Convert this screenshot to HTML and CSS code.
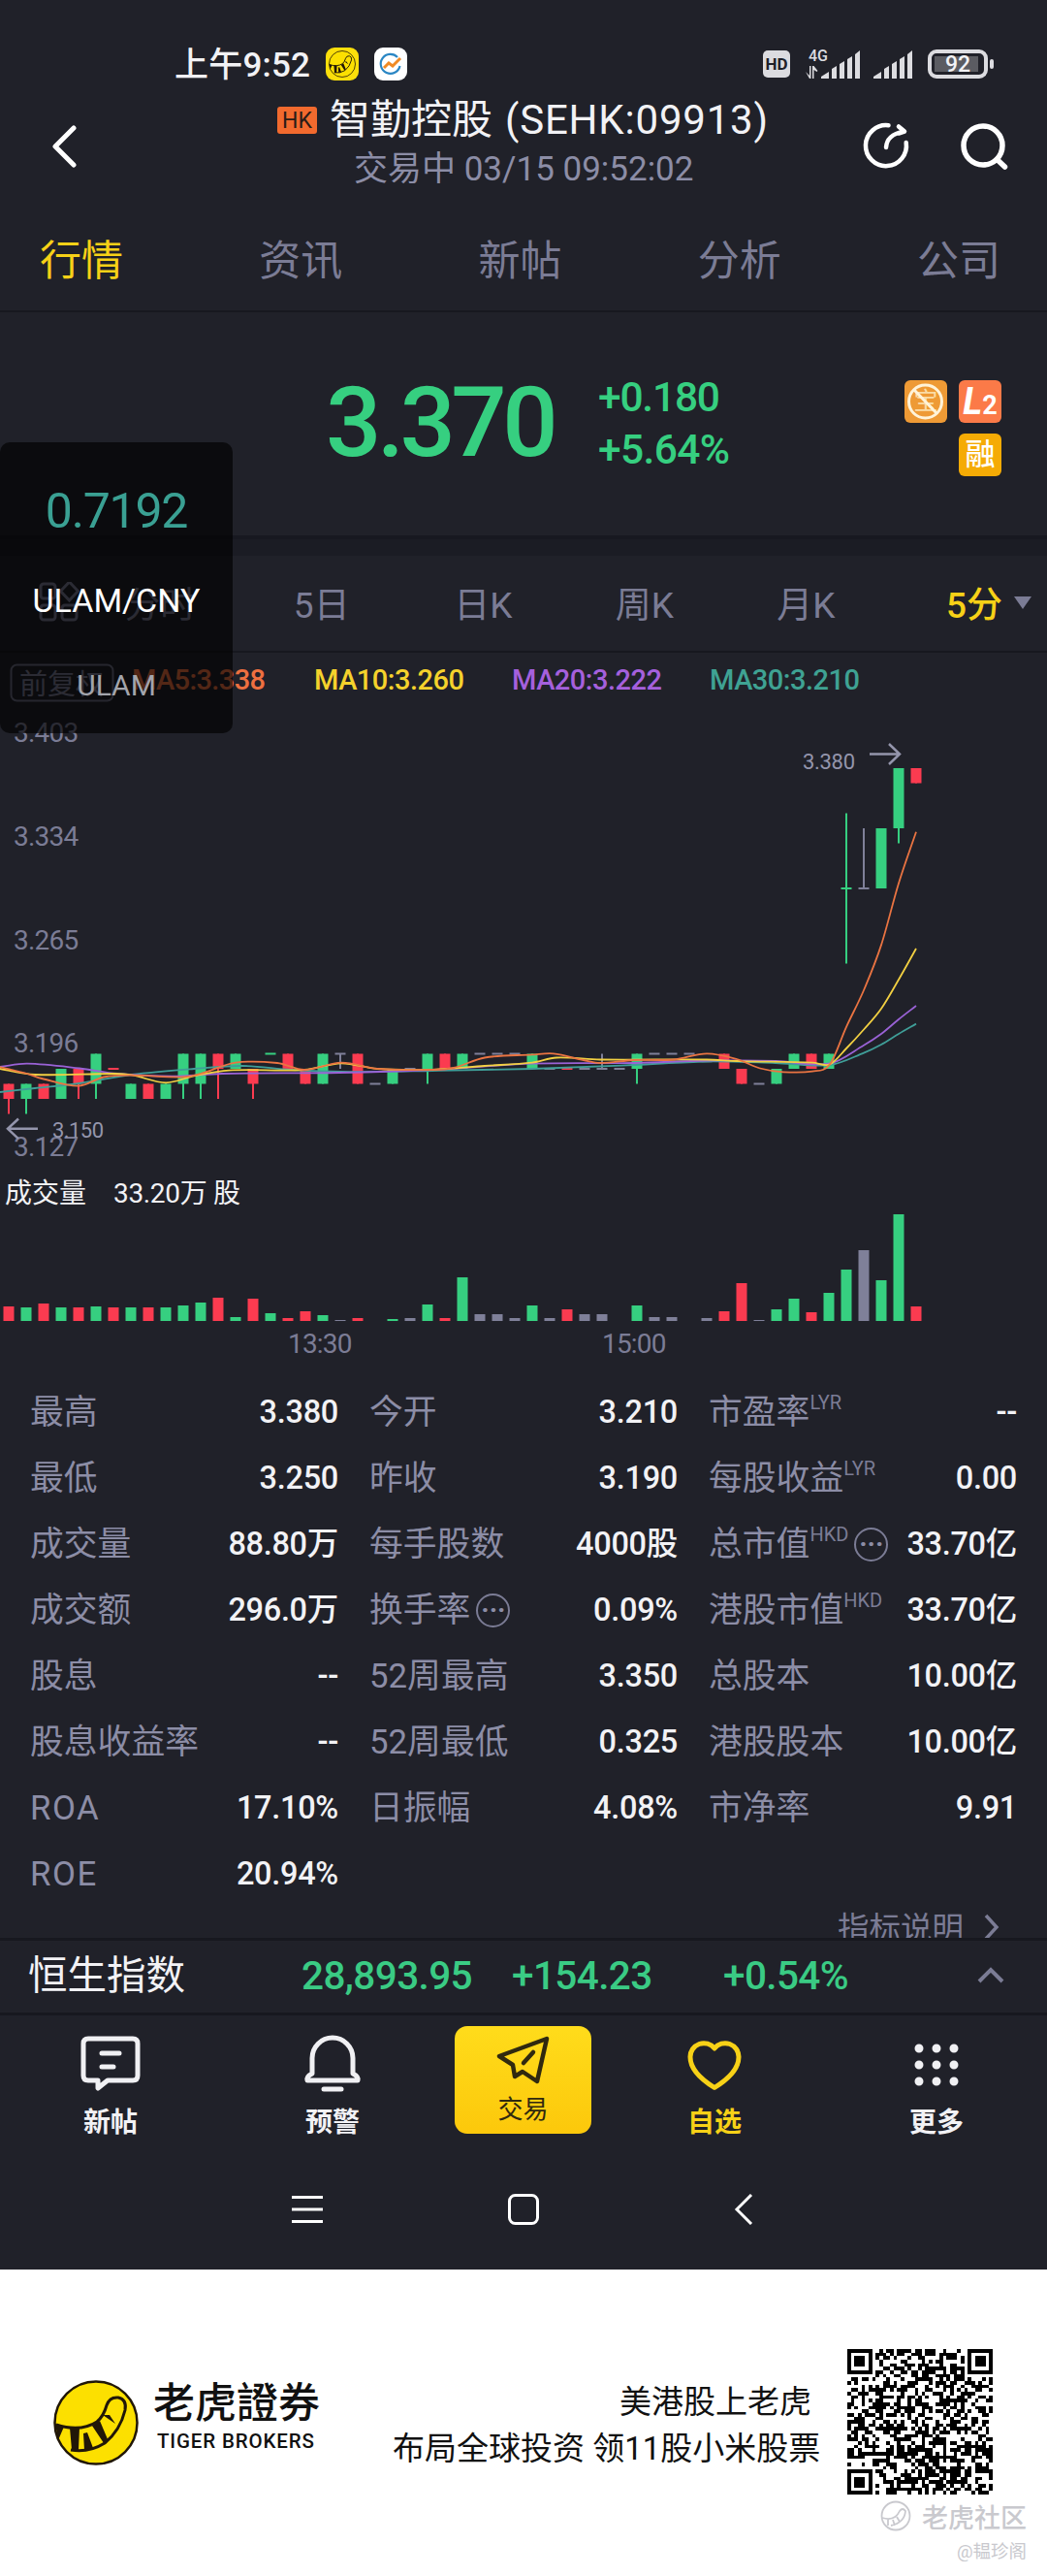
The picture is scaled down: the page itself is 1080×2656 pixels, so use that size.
FILE: index.html
```
<!DOCTYPE html>
<html lang="zh-CN">
<head>
    <meta charset="UTF-8">
    <title>智勤控股 (SEHK:09913)</title>
    <link rel="stylesheet" href="styles.css">
</head>
<body>
    <div class="phone">
        <div class="status-bar">
            <span class="clock">上午9:52</span>
            <svg class="app-icon" width="34" height="34" viewBox="0 0 34 34">
                <rect width="34" height="34" rx="9" fill="#fcdf0b"/>
                <g transform="translate(3 3) scale(.318)"><use href="#tiger"/></g>
            </svg>
            <svg class="app-icon" width="34" height="34" viewBox="0 0 34 34">
                <rect width="34" height="34" rx="9" fill="#fff"/>
                <path d="M24 10a10 10 0 1 0 2.500 9" fill="none" stroke="#2a86c4" stroke-width="2.200"/>
                <path d="M10 21l5-5 4 3 8-8" fill="none" stroke="#f08a24" stroke-width="3"/>
            </svg>
            <div class="status-right">
                <span class="hd">HD</span>
                <svg width="58" height="36" viewBox="0 0 58 36" fill="#dcdce0">
                    <text x="3" y="15" font-size="16" font-weight="500">4G</text>
                    <path d="M0 26l4 4V20h1.500v13H4zM7 33V20h1.500l4 5-1 1-3-2v9z"/>
                    <path d="M16 33v-2l8-5v7zM27 33V23l5-3v13zM35 33V18l5-3v18zM43 33V13l5-3v23zM51 33V8l5-4v29z"/>
                </svg>
                <svg width="42" height="36" viewBox="0 0 42 36" fill="#dcdce0">
                    <path d="M0 33v-2l8-5v7zM11 33V23l5-3v13zM19 33V18l5-3v18zM27 33V13l5-3v23zM35 33V8l5-4v29z"/>
                </svg>
                <div class="battery"><span>92</span></div>
            </div>
        </div>

        <div class="header">
            <svg class="back" width="28" height="46" viewBox="0 0 28 46"><path d="M25 4L6 23l19 19" fill="none" stroke="#fff" stroke-width="5" stroke-linecap="round" stroke-linejoin="round"/></svg>
            <div class="heading">
                <div class="title"><span class="hk">HK</span><span>智勤控股</span><span class="code">(SEHK:09913)</span></div>
                <div class="subtitle">交易中 03/15 09:52:02</div>
            </div>
            <svg width="50" height="50" viewBox="0 0 50 50" fill="none" stroke="#fff" stroke-width="4.500" stroke-linecap="round" stroke-linejoin="round">
                <path d="M27.500 4.300A21 21 0 1 0 45.700 22"/>
                <path d="M25 27c.5-8 6-14.500 18-16M38 5.500l6 5-6 2"/>
            </svg>
            <svg class="search" width="50" height="50" viewBox="0 0 50 50" fill="none" stroke="#fff" stroke-width="5.500" stroke-linecap="round">
                <circle cx="24" cy="25" r="20"/><path d="M38.500 39.500l8 7.500"/>
            </svg>
        </div>

        <div class="tabs">
            <span class="active">行情</span><span>资讯</span><span>新帖</span><span>分析</span><span>公司</span>
        </div>

        <div class="quote">
            <div class="price">3.370</div>
            <div class="change"><span>+0.180</span><span class="rise">+5.64%</span></div>
            <div class="badges">
                <span class="badge badge-bao">宝<svg width="43" height="44" viewBox="0 0 43 44" fill="none" stroke="#fff3d8" stroke-width="3"><circle cx="21.500" cy="22" r="17"/><path d="M10 10l23 24"/></svg></span>
                <span class="badge badge-l2">L<small>2</small></span>
                <span class="badge badge-rong">融</span>
            </div>
        </div>

        <div class="band"></div>

        <div class="periods">
            <svg width="42" height="42" viewBox="0 0 42 42" fill="none" stroke="#7b7c95" stroke-width="3">
                <rect x="2" y="2" width="15" height="15" rx="3"/><rect x="2" y="24" width="15" height="15" rx="3"/>
                <rect x="24" y="24" width="15" height="15" rx="3"/><path d="M31.500 0l9 9.500-9 9.500-9-9.500z"/>
            </svg>
            <span>分时</span><span>5日</span><span>日K</span><span>周K</span><span>月K</span><span class="active">5分<i></i></span>
        </div>

        <svg id="chart" class="chart" width="1080" height="749" viewBox="0 673 1080 749">
            <rect x="11.500" y="685.500" width="105" height="37" rx="6" fill="none" stroke="#6d6e85" stroke-width="2"/>
            <text x="20" y="716" font-size="29" fill="#7b7c95">前复权</text>
            <g class="ma">
                <text x="136" y="711" textLength="138" fill="#ee7040">MA5:3.338</text>
                <text x="324" y="711" textLength="155" fill="#f5d22c">MA10:3.260</text>
                <text x="528" y="711" textLength="155" fill="#a560dd">MA20:3.222</text>
                <text x="732" y="711" textLength="155" fill="#3fa293">MA30:3.210</text>
            </g>
            <g class="axis">
                <text x="14" y="765">3.403</text>
                <text x="14" y="872">3.334</text>
                <text x="14" y="979">3.265</text>
                <text x="14" y="1085">3.196</text>
                <text x="14" y="1192">3.127</text>
                <text x="297" y="1395">13:30</text>
                <text x="621" y="1395">15:00</text>
            </g>
            <g id="plot"></g>
            <g class="marker">
                <text x="828" y="793" textLength="54">3.380</text>
                <path d="M897 777.500h30M917 767l11 10.500-11 10.500"/>
                <text x="54" y="1173" textLength="53">3.150</text>
                <path d="M39 1163.800H9M19 1153.500l-11 10.300 11 10.300"/>
            </g>
            <text x="5" y="1240" font-size="28" fill="#f2f2f5">成交量</text>
            <text x="117" y="1240" font-size="28" fill="#f2f2f5" textLength="131">33.20万 股</text>
        </svg>

        <div class="stats">
            <div><label>最高</label><b>3.380</b></div>
            <div><label>今开</label><b>3.210</b></div>
            <div><label>市盈率<sup>LYR</sup></label><b>--</b></div>
            <div><label>最低</label><b>3.250</b></div>
            <div><label>昨收</label><b>3.190</b></div>
            <div><label>每股收益<sup>LYR</sup></label><b>0.00</b></div>
            <div><label>成交量</label><b>88.80万</b></div>
            <div><label>每手股数</label><b>4000股</b></div>
            <div><label>总市值<sup>HKD</sup></label><span class="dots">···</span><b>33.70亿</b></div>
            <div><label>成交额</label><b>296.0万</b></div>
            <div><label>换手率</label><span class="dots">···</span><b>0.09%</b></div>
            <div><label>港股市值<sup>HKD</sup></label><b>33.70亿</b></div>
            <div><label>股息</label><b>--</b></div>
            <div><label>52周最高</label><b>3.350</b></div>
            <div><label>总股本</label><b>10.00亿</b></div>
            <div><label>股息收益率</label><b>--</b></div>
            <div><label>52周最低</label><b>0.325</b></div>
            <div><label>港股股本</label><b>10.00亿</b></div>
            <div><label class="latin">ROA</label><b>17.10%</b></div>
            <div><label>日振幅</label><b>4.08%</b></div>
            <div><label>市净率</label><b>9.91</b></div>
            <div><label class="latin">ROE</label><b>20.94%</b></div>
        </div>
        <div class="more-link"><span>指标说明</span><svg width="18" height="28" viewBox="0 0 18 28"><path d="M3 2l11 12L3 26" fill="none" stroke="#7b7c95" stroke-width="3.500"/></svg></div>

        <div class="index-bar">
            <span class="name">恒生指数</span>
            <span class="num">28,893.95</span>
            <span class="num diff">+154.23</span>
            <span class="num pct">+0.54%</span>
            <svg width="30" height="18" viewBox="0 0 30 18"><path d="M3 15L15 3l12 12" fill="none" stroke="#7b7c95" stroke-width="4"/></svg>
        </div>

        <div class="nav">
            <div class="nav-item">
                <svg width="64" height="60" viewBox="0 0 64 60" fill="none" stroke="#f0f0f3" stroke-width="5" stroke-linejoin="round" stroke-linecap="round">
                    <path d="M9 5h46q5 0 5 5v33q0 5-5 5H29l-10 8v-8H9q-5 0-5-5V10q0-5 5-5z"/><path d="M23 20h18M23 34h12"/>
                </svg>新帖
            </div>
            <div class="nav-item">
                <svg width="64" height="60" viewBox="0 0 64 60" fill="none" stroke="#f0f0f3" stroke-width="5" stroke-linejoin="round" stroke-linecap="round">
                    <path d="M6 48q-1-4 5-7V25a21 21 0 0 1 42 0v16q6 3 5 7z"/><path d="M23 57h18"/>
                </svg>预警
            </div>
            <div class="trade">
                <svg width="56" height="50" viewBox="0 0 56 50" fill="none" stroke="#30290f" stroke-width="4.500" stroke-linejoin="round" stroke-linecap="round">
                    <path d="M52 3L3 21l14 9 2 12 8-5 15 10z"/><path d="M38 17L28 28"/>
                </svg>交易
            </div>
            <div class="nav-item active">
                <svg width="64" height="60" viewBox="0 0 64 60" fill="none" stroke="#f7d117" stroke-width="5" stroke-linejoin="round">
                    <path d="M32 55.500Q7 40 7 24A14 14 0 0 1 32 15A14 14 0 0 1 57 24Q57 40 32 55.500z"/>
                </svg>自选
            </div>
            <div class="nav-item">
                <svg width="64" height="60" viewBox="0 0 64 60" fill="none" stroke="#f0f0f3" stroke-width="9" stroke-linecap="round" stroke-dasharray="0 18">
                    <path d="M14 15h37M14 32h37M14 49h37"/>
                </svg>更多
            </div>
        </div>

        <div class="system-nav">
            <svg width="32" height="32" viewBox="0 0 32 32" stroke="#fff" stroke-width="3"><path d="M0 3.500h32M0 16h32M0 28.500h32"/></svg>
            <svg width="32" height="32" viewBox="0 0 32 32"><rect x="1.500" y="1.500" width="29" height="29" rx="6" fill="none" stroke="#fff" stroke-width="3"/></svg>
            <svg width="32" height="32" viewBox="0 0 32 32"><path d="M28 1L13 16l15 15" fill="none" stroke="#fff" stroke-width="3"/></svg>
        </div>

        <div class="popup">
            <span class="rate">0.7192</span>
            <span class="pair">ULAM/CNY</span>
            <span class="coin">ULAM</span>
        </div>
    </div>

    <div class="footer">
        <svg class="logo" width="88" height="88" viewBox="0 0 88 88">
            <g id="tiger">
                <circle cx="44" cy="44" r="42.500" fill="#fce000" stroke="#211708" stroke-width="2.500"/>
                <path d="M3 46Q28 54 45 43Q52 37 55 26Q58 17 67 18Q76 20 74 31Q69 52 53 65Q37 75 18 72" fill="none" stroke="#211708" stroke-width="3"/>
                <path d="M2 45l9 3-6 14zM17 49h10l-1 23h-7zM31 55l4-1 6 16-9 2zM40 47l8-5 8 19-4 4zM51 36l7 0 6 9z" fill="#211708"/>
            </g>
        </svg>
        <div class="brand"><span class="brand-cn">老虎證券</span><span class="brand-en">TIGER BROKERS</span></div>
        <div class="slogan"><span class="first">美港股上老虎</span><span>布局全球投资 领11股小米股票</span></div>
        <svg id="qr" class="qr" width="150" height="150" viewBox="0 0 41 41" shape-rendering="crispEdges"></svg>
        <div class="watermark">
            <div class="community">
                <svg width="32" height="32" viewBox="0 0 32 32" fill="none" stroke="#c9c9ce" stroke-width="1.800"><circle cx="16" cy="16" r="14.500"/><path d="M2 18q13 4 18-7 3-4 6 0-1 12-15 15M8 20v6M13 20l2 6M17 17l3 5"/></svg>
                <span>老虎社区</span>
            </div>
            <div class="user">@韫珍阁</div>
        </div>
    </div>
    <script src="chart.js"></script>
</body>
</html>
```
FILE: styles.css
```
* {
    box-sizing: border-box;
}
body {
    margin: 0;
    width: 1080px;
    background: #fff;
    font-family: Roboto, "Noto Sans CJK SC", sans-serif;
}
svg {
    display: block;
    flex: none;
}
.phone {
    position: relative;
    height: 2340px;
    background: #202129;
    color: #f2f2f5;
    overflow: hidden;
}
.status-bar {
    height: 100px;
    padding: 32px 54px 0 180px;
    display: flex;
    align-items: center;
}
.clock {
    width: 156px;
    padding-bottom: 6px;
    font-size: 35px;
    font-weight: 500;
    letter-spacing: 0.2px;
    white-space: nowrap;
}
.app-icon {
    margin-right: 16px;
}
.status-right {
    margin-left: auto;
    display: flex;
    align-items: center;
}
.hd {
    width: 28px;
    height: 28px;
    margin-right: 16px;
    border-radius: 5px;
    background: #dcdce0;
    color: #202129;
    font-size: 17px;
    font-weight: 700;
    line-height: 29px;
    text-align: center;
}
.status-right svg + svg {
    margin-left: 12px;
}
.battery {
    position: relative;
    width: 62px;
    height: 30px;
    margin-left: 14px;
    margin-right: 7px;
    border: 4px solid #dcdce0;
    border-radius: 9px;
    background: linear-gradient(#5b5c62, #5b5c62) 3px 3px / 45px 16px no-repeat;
    font-size: 23px;
    font-weight: 500;
    line-height: 23px;
    text-align: center;
}
.battery::after {
    content: "";
    position: absolute;
    right: -10px;
    top: 6px;
    width: 4px;
    height: 10px;
    border-radius: 2px;
    background: #dcdce0;
}
.header {
    height: 100px;
    display: flex;
    align-items: center;
    padding-left: 51px;
}
.back {
    margin-top: 2px;
}
.heading {
    width: 810px;
    height: 100px;
    padding-left: 207px;
}
.title {
    display: flex;
    align-items: center;
    height: 48px;
    font-size: 42px;
    line-height: 46px;
    white-space: nowrap;
}
.hk {
    width: 41px;
    height: 28px;
    margin-right: 13px;
    border-radius: 3px;
    background: #f26a2e;
    color: #2a1c18;
    font-size: 23px;
    line-height: 29px;
    text-align: center;
}
.code {
    margin-left: 13px;
    letter-spacing: 0.8px;
}
.subtitle {
    height: 50px;
    padding-left: 79px;
    font-size: 35px;
    line-height: 54px;
    color: #8c8da6;
    white-space: nowrap;
}
.tabs {
    height: 122px;
    padding: 9px 48px 0 41px;
    border-bottom: 2px solid #17181f;
    display: flex;
    align-items: center;
    justify-content: space-between;
    font-size: 43px;
    color: #7b7c95;
}
.search {
    margin-left: 51px;
}
.active {
    color: #f7d117;
}
.quote {
    height: 230px;
    display: flex;
    padding-left: 336px;
    color: #36cf80;
}
.price {
    width: 281px;
    font-size: 101px;
    font-weight: 500;
    line-height: 228px;
    letter-spacing: -4.500px;
}
.change {
    width: 290px;
    padding-top: 61px;
    font-size: 42.500px;
    font-weight: 500;
    letter-spacing: -1.200px;
}
.change span {
    display: block;
    line-height: 54px;
}
.change .rise {
    letter-spacing: -0.600px;
}
.badges {
    width: 126px;
    padding-top: 70px;
    display: flex;
    flex-wrap: wrap;
    justify-content: flex-end;
    align-content: flex-start;
    gap: 11px 12px;
}
.badge {
    position: relative;
    width: 44px;
    height: 44px;
    border-radius: 6px;
    color: #fff;
    line-height: 44px;
    text-align: center;
}
.badge-bao {
    background: #ee9a35;
    color: #fbdca5;
    font-size: 25px;
}
.badge-bao svg {
    position: absolute;
    left: 0;
    top: 0;
}
.badge-l2 {
    background: #fb7a48;
    font-size: 38px;
    font-weight: 700;
    font-style: italic;
}
.badge-l2 small {
    font-size: 27px;
    font-style: normal;
}
.badge-rong {
    background: #f5ab05;
    font-size: 31px;
    font-weight: 500;
}
.band {
    height: 21px;
    border-top: 4px solid #171820;
    background: #1b1c24;
}
.periods {
    height: 100px;
    padding: 0 16px 2px 40px;
    border-bottom: 2px solid #17181f;
    display: flex;
    align-items: center;
    color: #7b7c95;
    font-size: 37px;
}
.periods span {
    flex: none;
    width: 166.500px;
    text-align: center;
}
.periods span.active {
    width: auto;
    margin-left: auto;
    display: flex;
    align-items: center;
    font-weight: 500;
}
.periods i {
    margin-left: 12px;
    border: 9px solid transparent;
    border-top: 13px solid #7b7c95;
    border-bottom: 0;
}
.chart .ma {
    font-size: 29px;
    font-weight: 500;
}
.chart .axis {
    font-size: 28px;
    fill: #7b7c95;
    letter-spacing: -0.800px;
}
.chart .marker text {
    font-size: 22px;
    fill: #9495ac;
}
.chart .marker path {
    fill: none;
    stroke: #9495ac;
    stroke-width: 2.500;
}
.stats {
    display: grid;
    grid-template-columns: repeat(3, 318px);
    grid-auto-rows: 68px;
    column-gap: 32px;
    padding-left: 31px;
}
.stats > div {
    display: flex;
    align-items: center;
    white-space: nowrap;
}
.stats label {
    font-size: 34.800px;
    line-height: 68px;
    color: #8c8da6;
}
.stats label.latin {
    letter-spacing: 1.500px;
}
.stats b {
    margin-left: auto;
    font-size: 32.500px;
    font-weight: 500;
    line-height: 68px;
    letter-spacing: -0.300px;
}
.stats sup {
    font-size: 20px;
    line-height: 0;
    vertical-align: 15px;
    color: #7b7c95;
}
.dots {
    width: 35px;
    height: 35px;
    margin-left: 6px;
    border: 2.500px solid #7b7c95;
    border-radius: 50%;
    color: #8c8da6;
    font-size: 28px;
    font-weight: 700;
    line-height: 29px;
    text-align: center;
}
.more-link {
    height: 32px;
    padding-left: 864px;
    display: flex;
    font-size: 32.500px;
    line-height: 46px;
    color: #7b7c95;
    overflow: hidden;
}
.more-link svg {
    margin: 7px 0 0 20px;
}
.index-bar {
    height: 80px;
    padding: 0 0 2px 29px;
    border-top: 3px solid #17181f;
    border-bottom: 3px solid #17181f;
    display: flex;
    align-items: center;
    font-size: 40.500px;
    line-height: 72px;
    white-space: nowrap;
}
.index-bar .name {
    width: 282px;
}
.index-bar .num {
    width: 217px;
    color: #3acb84;
    font-weight: 500;
    letter-spacing: -0.600px;
}
.index-bar .diff {
    width: 218px;
}
.index-bar .pct {
    width: 261px;
    letter-spacing: -0.600px;
}
.nav {
    height: 150px;
    display: flex;
    padding-left: 82px;
}
.nav-item {
    width: 64px;
    padding-top: 19px;
    font-size: 28px;
    font-weight: 700;
    line-height: 58px;
    text-align: center;
    white-space: nowrap;
}
.nav-item + .nav-item {
    margin-left: 165px;
}
.nav-item svg {
    margin-bottom: 3px;
}
.nav .trade {
    width: 141px;
    height: 111px;
    margin: 11px 95px 0 94px;
    padding-top: 10px;
    border-radius: 13px;
    background: linear-gradient(#ffdc1b, #fcc80b);
    color: #30290f;
    font-size: 26px;
    line-height: 44px;
    text-align: center;
}
.trade svg {
    margin: 0 auto 4px;
}
.system-nav {
    display: flex;
    gap: 191px;
    padding: 34px 0 0 301px;
}
.popup {
    position: absolute;
    left: 0;
    top: 456px;
    width: 240px;
    height: 300px;
    padding-top: 43px;
    border-radius: 10px;
    background: rgba(0, 0, 0, 0.65);
    text-align: center;
}
.popup span {
    display: block;
}
.rate {
    height: 56px;
    font-size: 50px;
    line-height: 56px;
    color: #3aa093;
    letter-spacing: -1.200px;
}
.pair {
    margin-top: 39px;
    font-size: 34px;
    line-height: 50px;
    color: #fff;
}
.coin {
    margin-top: 39px;
    font-size: 30px;
    line-height: 48px;
    color: #a3a5ac;
}
.footer {
    position: relative;
    height: 316px;
    padding: 82px 0 0 55px;
    display: flex;
    color: #111;
}
.logo {
    margin-top: 32px;
}
.brand {
    width: 245px;
    padding: 22px 0 0 15px;
}
.brand span,
.slogan span {
    display: block;
    white-space: nowrap;
}
.brand-cn {
    font-family: "Noto Sans CJK TC", sans-serif;
    font-size: 43px;
    font-weight: 500;
    line-height: 60px;
}
.brand-en {
    padding-left: 4px;
    font-size: 20.500px;
    font-weight: 500;
    line-height: 26px;
    letter-spacing: 0.850px;
}
.slogan {
    width: 486px;
    padding: 31px 0 0 17px;
    font-size: 33px;
    line-height: 48px;
}
.slogan .first {
    padding-left: 234px;
}
.watermark {
    position: absolute;
    right: 21px;
    top: 235px;
    color: #c9c9ce;
    text-align: right;
}
.community {
    display: flex;
    align-items: center;
    gap: 11px;
    height: 38px;
    font-size: 27px;
    font-weight: 500;
}
.user {
    font-size: 18.500px;
    line-height: 36px;
}
```
FILE: chart.js
```
const GREEN = '#36cf80';
const RED = '#fb3b50';
const GRAY = '#7f8099';
const COLORS = { g: GREEN, r: RED, n: GRAY };

// [color, body top, body bottom, high, low, volume], prices in cents above 3.00
const candles = [
    ['r', 17, 16, 17, 15, 15], ['g', 17, 16, 17, 15, 14], ['r', 17, 16, 17, 16, 18],
    ['g', 18, 16, 18, 16, 14], ['r', 18, 17, 18, 16, 14], ['g', 19, 17, 19, 16, 15],
    ['r', 18, 18, 18, 18, 14], ['g', 17, 16, 17, 16, 14], ['r', 17, 16, 17, 16, 14],
    ['g', 17, 16, 17, 16, 14], ['g', 19, 17, 19, 16, 16], ['g', 19, 17, 19, 16, 19],
    ['r', 19, 18, 19, 16, 24], ['g', 19, 18, 19, 18, 4], ['r', 18, 17, 18, 16, 23],
    ['g', 19, 19, 19, 19, 8], ['r', 19, 18, 19, 18, 3], ['r', 18, 17, 18, 17, 10],
    ['g', 19, 17, 19, 17, 6], ['n', 19, 19, 19, 18, 1], ['r', 19, 17, 19, 17, 3],
    ['n', 17, 17, 17, 17, 0], ['g', 18, 17, 18, 17, 2], ['n', 18, 18, 18, 18, 3],
    ['g', 19, 18, 19, 17, 17], ['r', 19, 18, 19, 18, 3], ['g', 19, 18, 19, 18, 45],
    ['n', 19, 19, 19, 19, 7], ['n', 19, 19, 19, 19, 7], ['n', 19, 19, 19, 19, 3],
    ['g', 19, 18, 19, 18, 16], ['n', 18, 18, 18, 18, 3], ['r', 18, 18, 18, 18, 12],
    ['n', 18, 18, 18, 18, 7], ['n', 18, 18, 19, 18, 7], ['n', 18, 18, 18, 18, 0],
    ['g', 19, 18, 19, 17, 16], ['n', 19, 19, 19, 19, 4], ['n', 19, 19, 19, 19, 4],
    ['n', 19, 19, 19, 19, 0], ['n', 18.5, 18.5, 18.5, 18.5, 3], ['r', 19, 18, 19, 18, 10],
    ['r', 18, 17, 18, 17, 39], ['n', 17, 17, 17, 17, 1], ['g', 18, 17, 18, 17, 12],
    ['g', 19, 18, 19, 18, 23], ['r', 19, 18, 19, 18, 9], ['g', 19, 18, 19, 18, 29],
    ['g', 30, 30, 35, 25, 53], ['n', 30, 30, 34, 30, 73], ['g', 34, 30, 34, 30, 42],
    ['g', 38, 34, 38, 33, 110], ['r', 38, 37, 38, 37, 15]
];

const averages = {
    '#3f9e98': [[0,1126],[36,1122],[82,1117],[136,1108],[200,1102],[250,1099],[300,1103],[352,1105],[446,1104],[549,1102],[654,1098],[729,1094.5],[800,1096],[856,1098],[891,1085.6],[909,1077],[927,1066],[945,1055.6]],
    '#9a62d6': [[0,1100],[28,1096.7],[82,1101.5],[121,1107],[178,1109.7],[229,1107],[350,1106],[446,1103],[549,1096.7],[654,1096],[729,1093.5],[800,1094],[856,1096.5],[891,1077.7],[909,1066],[927,1051],[945,1037]],
    '#f2d042': [[0,1102],[36,1108],[118,1107],[136,1108.4],[171,1116.3],[200,1109.4],[236,1103.6],[314,1103],[352,1096.3],[389,1102],[446,1102.8],[500,1099],[549,1095.6],[574,1090.5],[619,1092.5],[729,1092.5],[760,1094],[838,1095.6],[856,1097.4],[873,1081],[891,1061.5],[909,1040],[927,1010],[945,978]],
    '#ea7442': [[0,1100],[28,1107],[43,1112],[81,1119.7],[107,1110.5],[136,1108.7],[189,1110.5],[207,1107],[243,1095.6],[286,1096],[314,1103],[352,1095.6],[389,1101.8],[446,1103],[468,1101],[500,1090.5],[549,1087.4],[571,1086.3],[602,1093],[619,1096],[654,1093],[695,1092.5],[729,1086.3],[760,1092],[784,1101.5],[808,1105.3],[838,1104.6],[856,1097.4],[873,1058.8],[891,1021],[909,974.4],[927,910.7],[945,857.7]]
};

const priceY = cents => 1086.5 + (19 - cents) * 15.5;

function rect(x, y, w, h, fill) {
    return `<rect x="${x}" y="${y}" width="${w}" height="${h}" fill="${fill}"/>`;
}

function smoothPath(p) {
    let d = `M${p[0]}`;
    for (let i = 0; i < p.length - 1; i++) {
        const a = p[i - 1] || p[i], b = p[i], c = p[i + 1], e = p[i + 2] || c;
        const k = (c[0] - b[0]) / 3;
        const s1 = c[0] === a[0] ? 0 : (c[1] - a[1]) / (c[0] - a[0]);
        const s2 = e[0] === b[0] ? 0 : (e[1] - b[1]) / (e[0] - b[0]);
        d += `C${b[0] + k},${b[1] + k * s1} ${c[0] - k},${c[1] - k * s2} ${c}`;
    }
    return d;
}

let out = '';
candles.forEach(([color, top, bottom, high, low, volume], i) => {
    const x = 9 + i * 18;
    const fill = COLORS[color];
    const y = priceY(top);
    if (high > low) {
        out += rect(x - 1, priceY(high), 2, priceY(low) - priceY(high), fill);
    }
    out += rect(x - 5.5, top === bottom ? y - 1 : y, 11, Math.max(priceY(bottom) - y, 2), fill);
    out += rect(x - 5.5, 1362 - volume, 11, volume, fill);
});
for (const color in averages) {
    out += `<path d="${smoothPath(averages[color])}" fill="none" stroke="${color}" stroke-width="1.8"/>`;
}
document.getElementById('plot').innerHTML = out;

// QR code: three finder squares, the rest filled from a seeded generator
function finder(x, y) {
    return rect(x, y, 7, 7, '#000') + rect(x + 1, y + 1, 5, 5, '#fff') + rect(x + 2, y + 2, 3, 3, '#000');
}
let seed = 9913;
let cells = '';
for (let y = 0; y < 41; y++) {
    for (let x = 0; x < 41; x++) {
        seed = (seed * 1103515245 + 12345) % 2147483648;
        const corner = (x < 8 && y < 8) || (x > 32 && y < 8) || (x < 8 && y > 32);
        if (!corner && seed / 2147483648 < 0.5) {
            cells += rect(x, y, 1, 1, '#000');
        }
    }
}
document.getElementById('qr').innerHTML = cells + finder(0, 0) + finder(34, 0) + finder(0, 34);
```
